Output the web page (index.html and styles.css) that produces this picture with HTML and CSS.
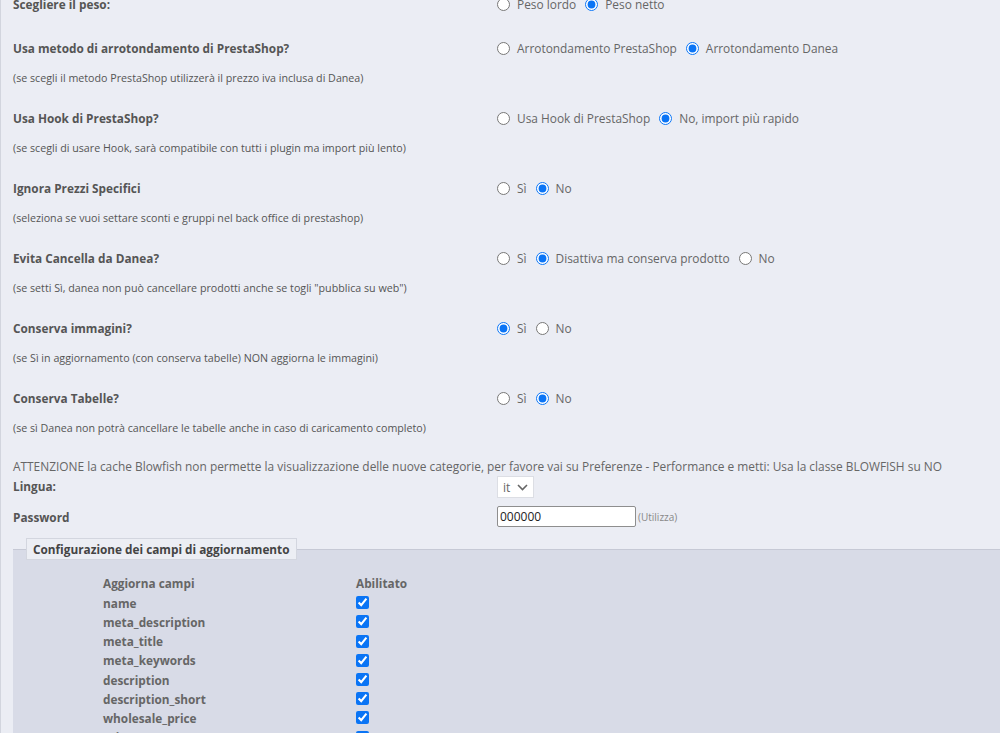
FILE: index.html
```html
<!DOCTYPE html>
<html lang="it">

<head>
    <meta charset="UTF-8">
    <meta name="viewport" content="width=device-width, initial-scale=1.0">
    <title>Configurazione Danea</title>
    <link rel="stylesheet" href="styles.css">
</head>

<body>
    <div class="page">
        <div class="row first">
            <div class="left">
                <div class="label">Scegliere il peso:</div>
            </div>
            <div class="opts">
                <label><input type="radio" name="peso"> Peso lordo</label>
                <label><input type="radio" name="peso" checked> Peso netto</label>
            </div>
        </div>

        <div class="row">
            <div class="left">
                <div class="label">Usa metodo di arrotondamento di PrestaShop?</div>
                <div class="hint">(se scegli il metodo PrestaShop utilizzerà il prezzo iva inclusa di Danea)</div>
            </div>
            <div class="opts">
                <label><input type="radio" name="arr"> Arrotondamento PrestaShop</label>
                <label><input type="radio" name="arr" checked> Arrotondamento Danea</label>
            </div>
        </div>

        <div class="row">
            <div class="left">
                <div class="label">Usa Hook di PrestaShop?</div>
                <div class="hint">(se scegli di usare Hook, sarà compatibile con tutti i plugin ma import più lento)</div>
            </div>
            <div class="opts">
                <label><input type="radio" name="hook"> Usa Hook di PrestaShop</label>
                <label><input type="radio" name="hook" checked> No, import più rapido</label>
            </div>
        </div>

        <div class="row">
            <div class="left">
                <div class="label">Ignora Prezzi Specifici</div>
                <div class="hint">(seleziona se vuoi settare sconti e gruppi nel back office di prestashop)</div>
            </div>
            <div class="opts">
                <label><input type="radio" name="prezzi"> Sì</label>
                <label><input type="radio" name="prezzi" checked> No</label>
            </div>
        </div>

        <div class="row">
            <div class="left">
                <div class="label">Evita Cancella da Danea?</div>
                <div class="hint">(se setti Sì, danea non può cancellare prodotti anche se togli "pubblica su web")</div>
            </div>
            <div class="opts">
                <label><input type="radio" name="canc"> Sì</label>
                <label><input type="radio" name="canc" checked> Disattiva ma conserva prodotto</label>
                <label><input type="radio" name="canc"> No</label>
            </div>
        </div>

        <div class="row">
            <div class="left">
                <div class="label">Conserva immagini?</div>
                <div class="hint">(se Sì in aggiornamento (con conserva tabelle) NON aggiorna le immagini)</div>
            </div>
            <div class="opts">
                <label><input type="radio" name="img" checked> Sì</label>
                <label><input type="radio" name="img"> No</label>
            </div>
        </div>

        <div class="row last">
            <div class="left">
                <div class="label">Conserva Tabelle?</div>
                <div class="hint">(se sì Danea non potrà cancellare le tabelle anche in caso di caricamento completo)</div>
            </div>
            <div class="opts">
                <label><input type="radio" name="tab"> Sì</label>
                <label><input type="radio" name="tab" checked> No</label>
            </div>
        </div>

        <p class="warn">ATTENZIONE la cache Blowfish non permette la visualizzazione delle nuove categorie, per favore vai su Preferenze - Performance e metti: Usa la classe BLOWFISH su NO</p>

        <div class="field lang">
            <div class="label">Lingua:</div>
            <span class="select">it
                <svg width="11" height="7" viewBox="0 0 11 7"><path d="M1 1l4.5 4.5L10 1" fill="none" stroke="#666" stroke-width="1.6"/></svg>
            </span>
        </div>

        <div class="field pass">
            <div class="label">Password</div>
            <div class="pw">
                <input type="text" value="000000">
                <span class="small">(Utilizza)</span>
            </div>
        </div>

        <fieldset>
            <legend>Configurazione dei campi di aggiornamento</legend>
            <div class="grid">
                <div class="th">Aggiorna campi</div>
                <div class="th">Abilitato</div>
                <div>name</div><div><input type="checkbox" checked></div>
                <div>meta_description</div><div><input type="checkbox" checked></div>
                <div>meta_title</div><div><input type="checkbox" checked></div>
                <div>meta_keywords</div><div><input type="checkbox" checked></div>
                <div>description</div><div><input type="checkbox" checked></div>
                <div>description_short</div><div><input type="checkbox" checked></div>
                <div>wholesale_price</div><div><input type="checkbox" checked></div>
                <div>price</div><div><input type="checkbox" checked></div>
            </div>
        </fieldset>
    </div>
</body>

</html>
```

FILE: styles.css
```css
* {
    padding: 0;
    margin: 0;
    box-sizing: border-box;
}

html,
body {
    height: 100%;
    overflow: hidden;
}

body {
    background-color: #ebedf4;
    font-family: "Open Sans", "Liberation Sans", sans-serif;
    color: #666;
}

.page {
    border-left: 1px solid #d2d5de;
    padding-left: 12px;
    margin-top: -6px;
    min-height: 800px;
}

.row {
    display: flex;
    margin-bottom: 20px;
}

.row.first {
    margin-bottom: 24px;
}

.row.last {
    margin-bottom: 18px;
}

.left {
    width: 484px;
    flex-shrink: 0;
}

.label {
    font-size: 11.8px;
    font-weight: bold;
    line-height: 20px;
    color: #555;
}

.hint {
    font-size: 10.7px;
    line-height: 20px;
    margin-top: 10px;
    color: #555;
}

.opts {
    display: flex;
    gap: 9px;
    height: 20px;
    align-items: center;
    font-size: 11.9px;
    color: #666;
}

.opts label {
    display: flex;
    align-items: center;
    gap: 7px;
}

.opts input {
    width: 13px;
    height: 13px;
    margin: 0;
    accent-color: #0a74f5;
    margin-top: 1px;
}

.warn {
    font-size: 11.9px;
    line-height: 20px;
    color: #666;
}

.field {
    display: flex;
    align-items: center;
}

.field .label {
    width: 484px;
}

.lang {
    height: 20px;
}

.select {
    display: flex;
    align-items: center;
    gap: 7px;
    height: 22px;
    margin-top: 2px;
    padding: 0 5px;
    background-color: #fff;
    border: 1px solid #dcdee4;
    font-size: 12px;
    color: #666;
}

.pass {
    margin-top: 9px;
    height: 23px;
}

.pw {
    display: flex;
    align-items: center;
    gap: 2px;
}

.pw input {
    width: 139px;
    height: 21px;
    border: 1px solid #8e8e8e;
    border-radius: 2px;
    padding: 0 2px;
    font: 12px "Open Sans", "Liberation Sans", sans-serif;
    color: #222;
    background-color: #fff;
}

.small {
    font-size: 10px;
    color: #888;
}

fieldset {
    margin-top: 10px;
    background-color: #d8dbe7;
    border: none;
    border-top: 1px solid #c6c9d5;
    margin-right: -20px;
    padding: 0 0 0 90px;
    min-height: 300px;
}

legend {
    margin-left: -77px;
    padding: 2px 6px;
    background-color: #eceef4;
    border: 1px solid #d3d6df;
    font-size: 11.8px;
    font-weight: bold;
    color: #444;
}

.grid {
    display: grid;
    grid-template-columns: 253px auto;
    grid-auto-rows: 19.2px;
    align-items: center;
    padding-top: 14px;
    font-size: 11.8px;
    font-weight: bold;
    color: #666;
}

.grid .th {
    margin-bottom: 1px;
}

.grid input {
    width: 13px;
    height: 13px;
    margin: 0;
    display: block;
    accent-color: #0a74f5;
}
```
